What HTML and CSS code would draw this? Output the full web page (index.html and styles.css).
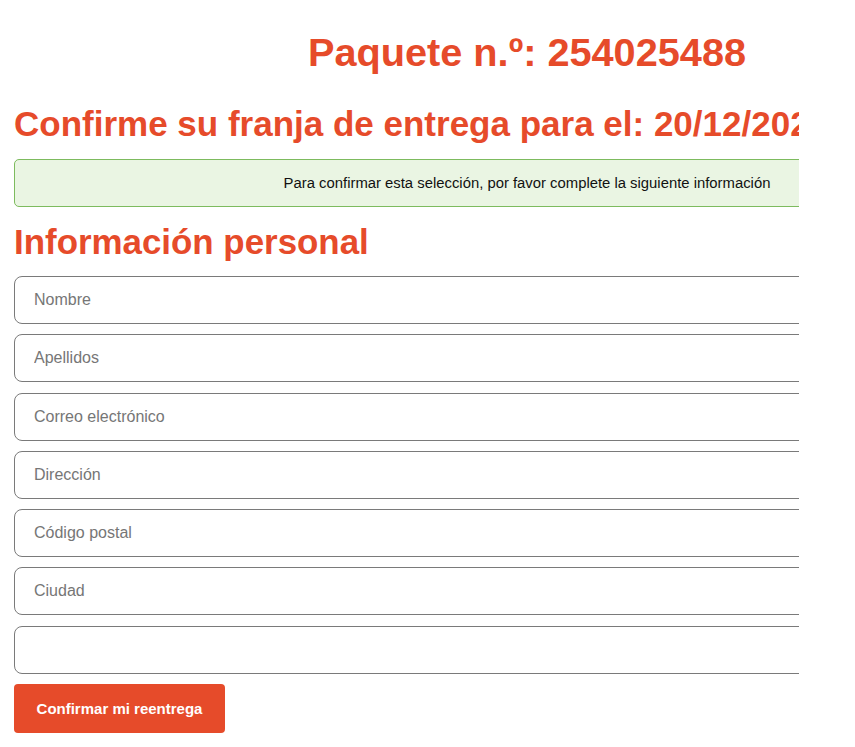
FILE: index.html
```html
<!DOCTYPE html>
<html lang="es">
<head>
<meta charset="utf-8">
<title>Paquete</title>
<link rel="stylesheet" href="styles.css">
</head>
<body>
<div class="frame">
  <div class="container">
    <h1 class="title">Paquete n.º: 254025488</h1>
    <h2 class="subtitle">Confirme su franja de entrega para el: 20/12/2024</h2>
    <div class="notice">Para confirmar esta selección, por favor complete la siguiente información</div>
    <h2 class="section">Información personal</h2>
    <form class="form">
      <input class="field" type="text" placeholder="Nombre">
      <input class="field" type="text" placeholder="Apellidos">
      <input class="field" type="email" placeholder="Correo electrónico">
      <input class="field" type="text" placeholder="Dirección">
      <input class="field" type="text" placeholder="Código postal">
      <input class="field" type="text" placeholder="Ciudad">
      <input class="field" type="tel">
      <button class="submit" type="button">Confirmar mi reentrega</button>
    </form>
  </div>
</div>
</body>
</html>
```
FILE: styles.css
```css
html, body {
  margin: 0;
  padding: 0;
  background: #ffffff;
}
body {
  font-family: "Liberation Sans", Arial, sans-serif;
}
.frame {
  width: 785px;
  margin-left: 14px;
  overflow: hidden;
}
.container {
  width: 1026px;
}
.title {
  margin: 29px 0 0 0;
  font-size: 39.7px;
  line-height: 46px;
  font-weight: bold;
  color: #e64b2a;
  text-align: center;
}
.subtitle {
  margin: 28px 0 0 0;
  font-size: 35px;
  line-height: 42px;
  font-weight: bold;
  color: #e64b2a;
  white-space: nowrap;
}
.notice {
  margin-top: 14px;
  box-sizing: border-box;
  height: 48px;
  display: flex;
  align-items: center;
  justify-content: center;
  background: #eaf5e3;
  border: 1px solid #7dbb5e;
  border-radius: 5px;
  font-size: 14.85px;
  color: #111111;
}
.section {
  margin: 14px 0 0 0;
  font-size: 34.9px;
  line-height: 42px;
  font-weight: bold;
  color: #e64b2a;
}
.form {
  margin-top: 13px;
  display: flex;
  flex-direction: column;
  align-items: flex-start;
  gap: 10.3px;
}
.field {
  width: 100%;
  height: 48px;
  box-sizing: border-box;
  border: 1px solid #7a7a7a;
  border-radius: 8px;
  padding: 0 19px;
  font-family: "Liberation Sans", Arial, sans-serif;
  font-size: 16px;
  color: #333333;
  background: #ffffff;
  outline: none;
}
.field::placeholder {
  color: #767676;
}
.submit {
  width: 211px;
  height: 49px;
  border: none;
  border-radius: 4px;
  background: #e64b2a;
  color: #ffffff;
  font-family: "Liberation Sans", Arial, sans-serif;
  font-size: 15px;
  font-weight: bold;
  cursor: pointer;
}
```
